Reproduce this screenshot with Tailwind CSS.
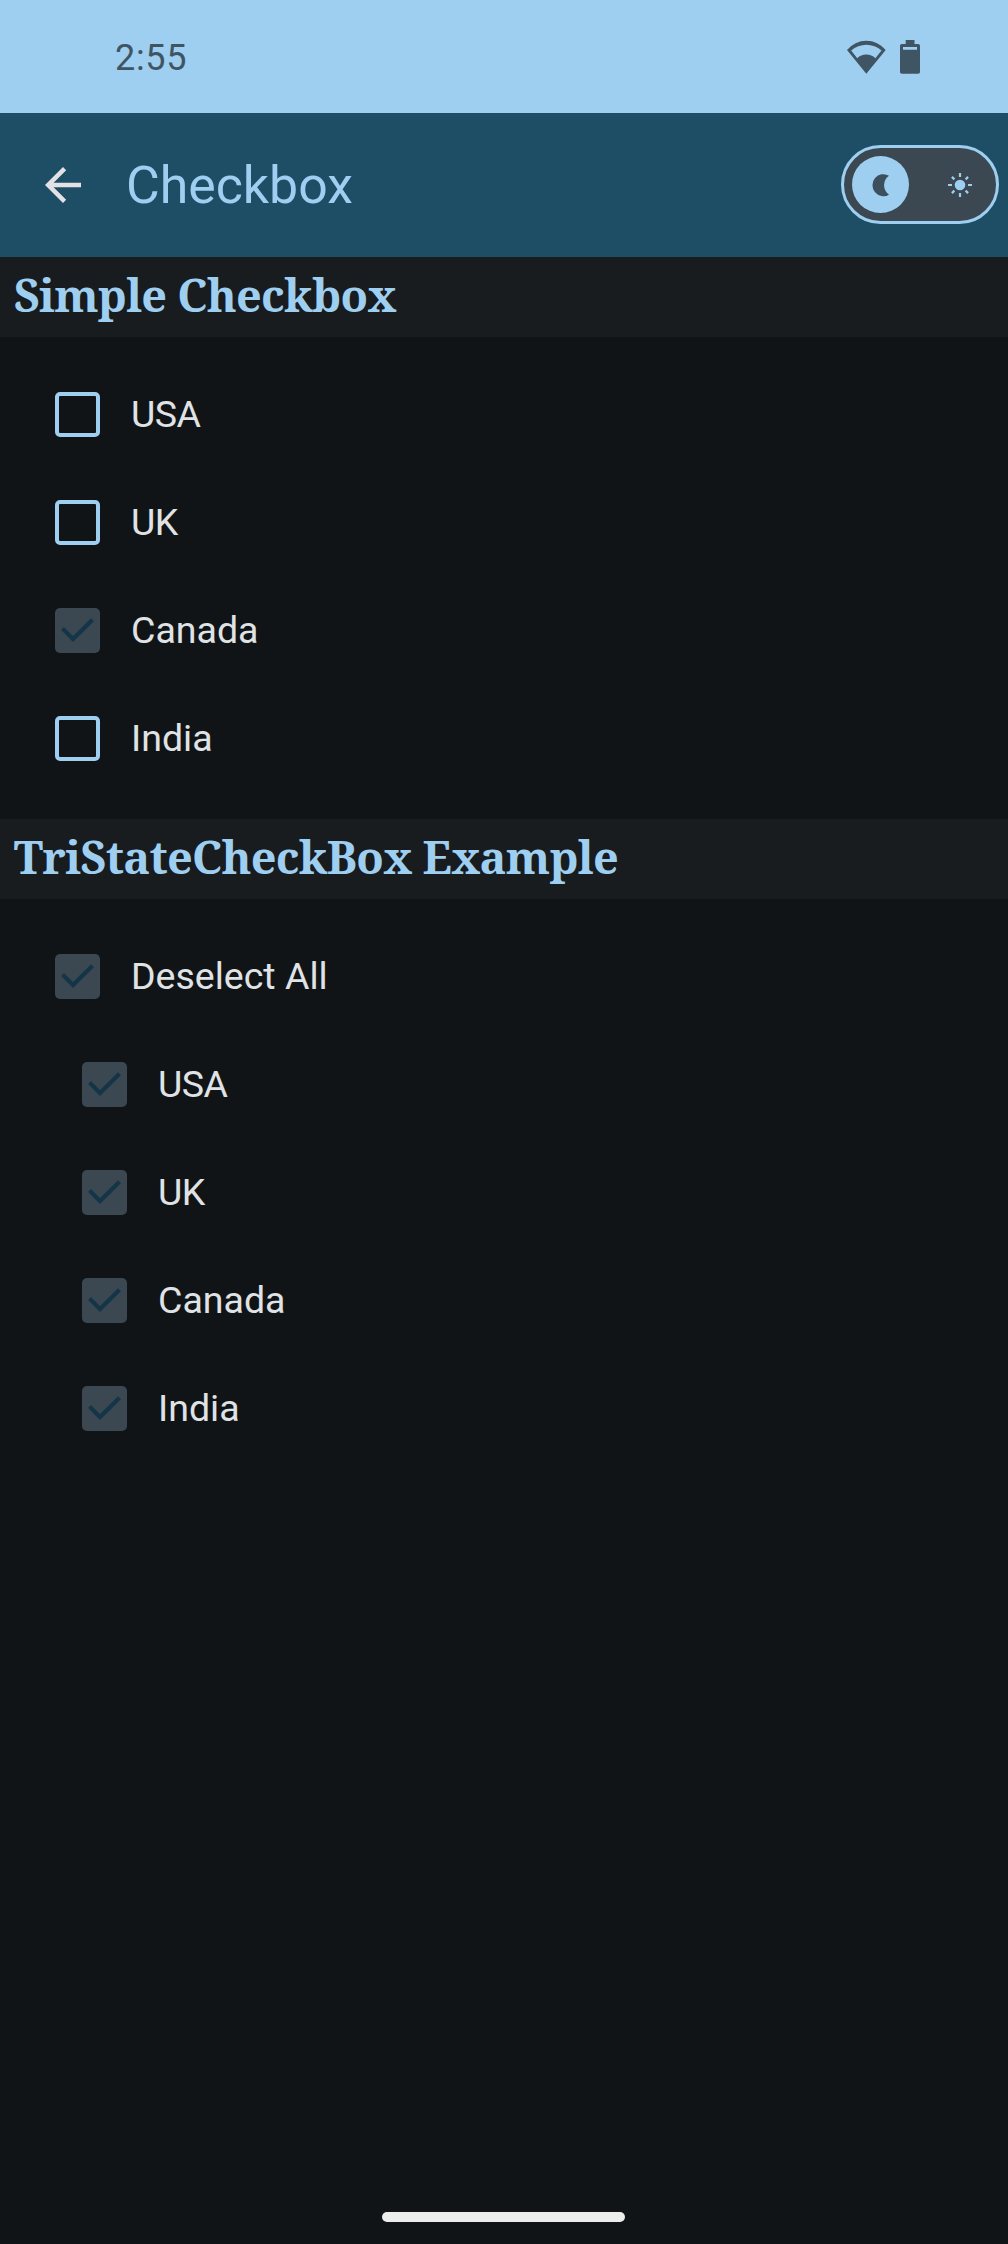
<!DOCTYPE html>
<html lang="en">
<head>
<meta charset="utf-8">
<meta name="viewport" content="width=device-width, initial-scale=1">
<title>Checkbox</title>
<script src="https://cdn.jsdelivr.net/npm/@tailwindcss/browser@4"></script>
</head>
<body class="bg-[#101416]">
<svg class="hidden">
  <symbol id="check" viewBox="0 0 45 45"><path d="M7.5 20.5 18 31 37.5 11.7" fill="none" stroke="#143548" stroke-width="4.2"/></symbol>
</svg>
<div class="flex h-[2244px] w-[1008px] flex-col overflow-hidden bg-[#101416] font-['Roboto',sans-serif] text-[#e0e3e5]">
  <!-- Status bar -->
  <div class="flex h-[113px] shrink-0 items-center justify-between bg-[#9ecef0] pr-[88px] pl-[115px] text-[#405563]">
    <span class="mt-[3px] text-[36px] leading-none font-[450] tracking-[0.7px]">2:55</span>
    <div class="mt-px flex items-center gap-[14px]">
      <svg class="h-[34px] w-[40px]" viewBox="0 0 40 34" fill="currentColor" fill-rule="evenodd"><path d="M20.3 33.7 1 10A25 25 0 0 1 39.7 10ZM5.2 10.6 11.2 18.2A13 13 0 0 1 29.4 18.2L35.5 10.6A22.5 22.5 0 0 0 5.2 10.6Z"/></svg>
      <svg class="h-[34px] w-[20px]" viewBox="0 0 20 34" fill="currentColor" fill-rule="evenodd"><path d="M5.7 0H14.5V4H18.2A1.8 1.8 0 0 1 20 5.8V32A1.8 1.8 0 0 1 18.2 33.8H1.8A1.8 1.8 0 0 1 0 32V5.8A1.8 1.8 0 0 1 1.8 4H5.7ZM3 7V9.8H17V7Z"/></svg>
    </div>
  </div>
  <!-- App bar -->
  <header class="flex h-36 shrink-0 items-center bg-[#1e4d66] pr-[9px] pl-9">
    <svg class="size-[54px]" viewBox="0 0 24 24" fill="#e2e2e5"><path d="M20 11H7.83l5.59-5.59L12 4l-8 8 8 8 1.41-1.41L7.83 13H20v-2z"/></svg>
    <h1 class="mt-0.5 ml-9 text-[51.8px] leading-[72px] text-[#9ecef0]">Checkbox</h1>
    <div class="-mt-px ml-auto flex h-[79px] w-[158px] items-center justify-between rounded-full border-[3px] border-[#9ecef0] bg-[#3b4852] pr-6 pl-2">
      <div class="flex size-[57px] items-center justify-center rounded-full bg-[#9ecef0]">
        <svg class="size-6" viewBox="0 0 24 24"><path d="M20 2.7A11 11 0 1 0 20 21.7A11.6 11.6 0 0 1 20 2.7Z" fill="#3b4f5d"/></svg>
      </div>
      <svg class="size-6" viewBox="0 0 24 24" fill="none" stroke="#9ecef0" stroke-width="2.2"><circle cx="12" cy="12" r="5.3" fill="#9ecef0" stroke="none"/><path d="M12 0v4M12 20v4M0 12h4M20 12h4M3.9 3.9 6.4 6.4M17.6 17.6l2.5 2.5M3.9 20.1l2.5-2.5M17.6 6.4l2.5-2.5"/></svg>
    </div>
  </header>
  <!-- Simple checkboxes -->
  <h2 class="h-20 shrink-0 bg-[#191c1e] pl-[13.7px] font-['Noto_Serif',serif] text-[45px] leading-[76px] font-bold tracking-[-0.71px] text-[#9ecef0]">Simple Checkbox</h2>
  <ul class="flex flex-col gap-[63px] py-[55px] pl-[55px] text-[37.5px] leading-[45px]">
    <li class="flex h-[45px] gap-[31px] tracking-[-0.6px]"><span class="size-[45px] rounded-[5px] border-4 border-[#9ecef0]"></span>USA</li>
    <li class="flex h-[45px] gap-[31px] tracking-[-0.6px]"><span class="size-[45px] rounded-[5px] border-4 border-[#9ecef0]"></span>UK</li>
    <li class="flex h-[45px] gap-[31px]"><svg class="size-[45px] rounded-[5px] bg-[#3b4852]"><use href="#check"/></svg>Canada</li>
    <li class="flex h-[45px] gap-[31px]"><span class="size-[45px] rounded-[5px] border-4 border-[#9ecef0]"></span>India</li>
  </ul>
  <!-- Tri-state checkboxes -->
  <h2 class="mt-[3px] h-20 shrink-0 bg-[#191c1e] pl-[13.7px] font-['Noto_Serif',serif] text-[45px] leading-[76px] font-bold tracking-[-0.71px] text-[#9ecef0]">TriStateCheckBox Example</h2>
  <ul class="flex flex-col gap-[63px] pt-[55px] pl-[55px] text-[37.5px] leading-[45px]">
    <li class="flex h-[45px] gap-[31px]"><svg class="size-[45px] rounded-[5px] bg-[#3b4852]"><use href="#check"/></svg>Deselect All</li>
    <li class="flex h-[45px] gap-[31px] pl-[27px] tracking-[-0.6px]"><svg class="size-[45px] rounded-[5px] bg-[#3b4852]"><use href="#check"/></svg>USA</li>
    <li class="flex h-[45px] gap-[31px] pl-[27px] tracking-[-0.6px]"><svg class="size-[45px] rounded-[5px] bg-[#3b4852]"><use href="#check"/></svg>UK</li>
    <li class="flex h-[45px] gap-[31px] pl-[27px]"><svg class="size-[45px] rounded-[5px] bg-[#3b4852]"><use href="#check"/></svg>Canada</li>
    <li class="flex h-[45px] gap-[31px] pl-[27px]"><svg class="size-[45px] rounded-[5px] bg-[#3b4852]"><use href="#check"/></svg>India</li>
  </ul>
  <!-- Gesture handle -->
  <div class="mt-auto mb-[22px] ml-[382px] h-[10px] w-[243px] shrink-0 rounded-full bg-[#eceded]"></div>
</div>
</body>
</html>
